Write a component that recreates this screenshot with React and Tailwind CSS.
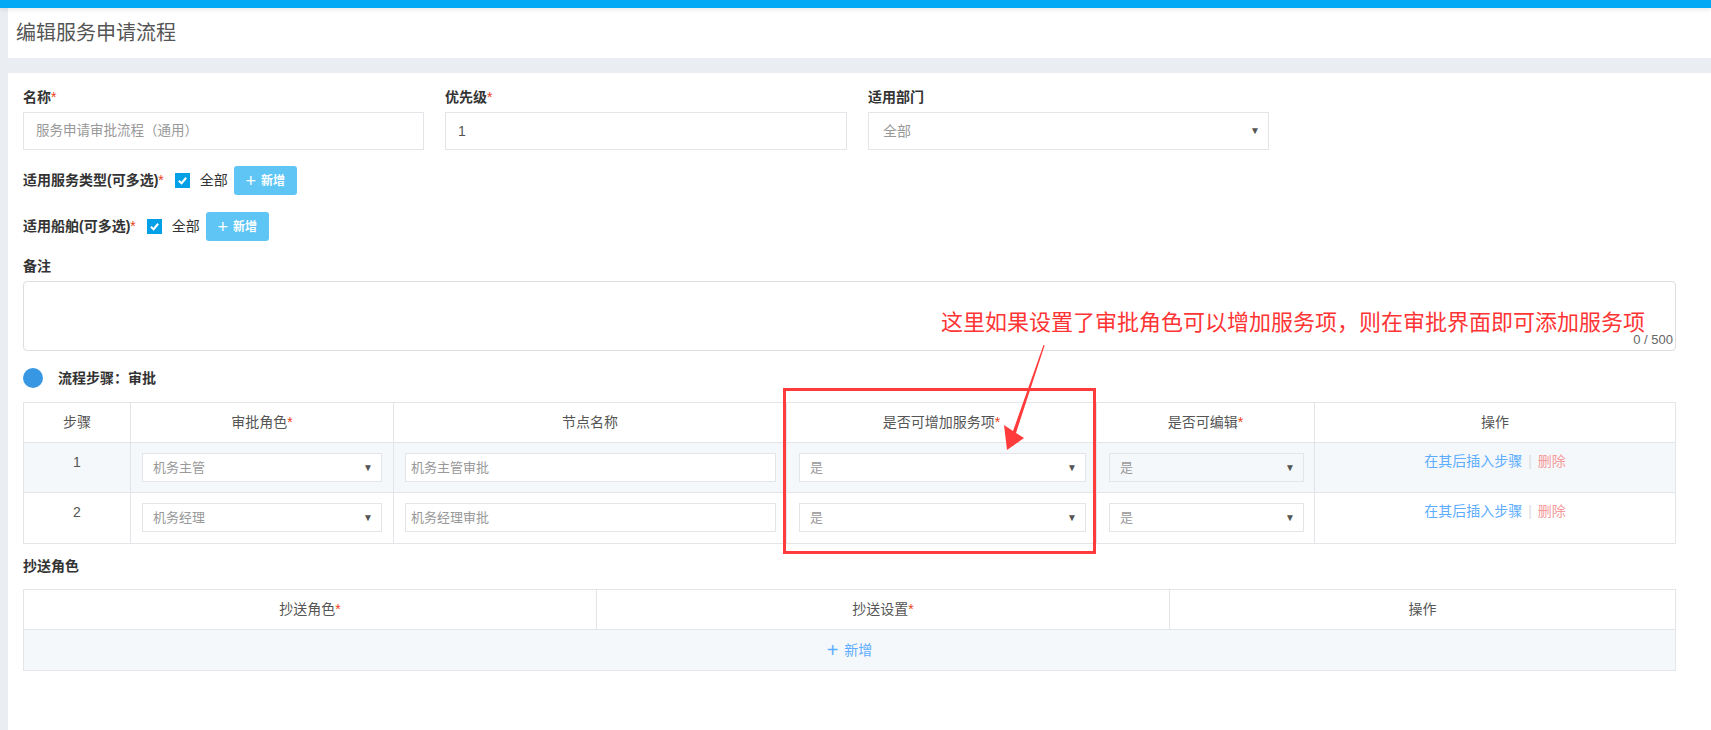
import React from "react";

const Star = () => <span className="font-normal text-[#ed4014]">*</span>;

function Caret() {
  return <span className="text-[10px] leading-none text-[#555]">▼</span>;
}

function Select({ value, className = "bg-white" }) {
  return (
    <div
      className={`flex h-[29px] items-center justify-between border border-[#e3e5e8] pl-[10px] pr-[8px] text-[13px] text-[#999] ${className}`}
    >
      <span>{value}</span>
      <Caret />
    </div>
  );
}

function TextBox({ value }) {
  return (
    <div className="flex h-[29px] items-center border border-[#e3e5e8] bg-white pl-[5px] text-[13px] text-[#999]">
      {value}
    </div>
  );
}

function AddButton() {
  return (
    <button className="flex h-[29px] w-[63px] items-center justify-center gap-[5px] rounded-[3px] bg-[#5ec5f5] text-[12px] font-bold text-white">
      <span className="text-[18px] font-light leading-none">+</span>
      新增
    </button>
  );
}

function Check() {
  return (
    <span className="flex h-[15px] w-[15px] items-center justify-center bg-[#03a0e8]">
      <svg width="11" height="11" viewBox="0 0 12 12">
        <path d="M2 6.2 L5 9 L10 3" fill="none" stroke="white" strokeWidth="2.2" />
      </svg>
    </span>
  );
}

const steps = [
  { n: "1", role: "机务主管", name: "机务主管审批", bg: "bg-[#f5f8fb]" },
  { n: "2", role: "机务经理", name: "机务经理审批", bg: "bg-white" },
];

export default function App() {
  return (
    <div className="relative min-h-screen bg-[#eaedf2] font-['Liberation_Sans','Noto_Sans_CJK_SC',sans-serif] text-[#333]">
      <div className="relative z-10 h-2 bg-[#03a9f4] shadow-[0_2px_4px_rgba(0,0,0,0.08)]" />
      <div className="pl-2">
        {/* header */}
        <div className="flex h-[50px] items-center bg-white pl-2 text-[20px] text-[#555]">
          编辑服务申请流程
        </div>
        <div className="h-[15px]" />

        {/* card */}
        <div className="min-h-[657px] bg-white pl-[15px] pr-[35px] pt-[15px]">
          {/* first row */}
          <div className="flex gap-[21px]">
            <div className="w-[401px]">
              <div className="mb-[6px] h-[18px] text-[14px] font-bold leading-[18px]">
                名称<Star />
              </div>
              <div className="flex h-[38px] items-center border border-[#e3e5e8] pl-[12px] text-[13.5px] text-[#999]">
                服务申请审批流程（通用）
              </div>
            </div>
            <div className="w-[402px]">
              <div className="mb-[6px] h-[18px] text-[14px] font-bold leading-[18px]">
                优先级<Star />
              </div>
              <div className="flex h-[38px] items-center border border-[#e3e5e8] pl-[12px] text-[14px] text-[#555]">
                1
              </div>
            </div>
            <div className="w-[401px]">
              <div className="mb-[6px] h-[18px] text-[14px] font-bold leading-[18px]">
                适用部门
              </div>
              <div className="flex h-[38px] items-center justify-between border border-[#e3e5e8] pl-[14px] pr-[8px] text-[14px] text-[#999]">
                <span>全部</span>
                <Caret />
              </div>
            </div>
          </div>

          {/* service types */}
          <div className="mt-[16px] flex h-[29px] items-center">
            <span className="text-[14px] font-bold">
              适用服务类型(可多选)<Star />
            </span>
            <span className="ml-[11px]">
              <Check />
            </span>
            <span className="ml-[10px] text-[14px]">全部</span>
            <span className="ml-[6px]">
              <AddButton />
            </span>
          </div>

          {/* ships */}
          <div className="mt-[17px] flex h-[29px] items-center">
            <span className="text-[14px] font-bold">
              适用船舶(可多选)<Star />
            </span>
            <span className="ml-[11px]">
              <Check />
            </span>
            <span className="ml-[10px] text-[14px]">全部</span>
            <span className="ml-[6px]">
              <AddButton />
            </span>
          </div>

          {/* remark */}
          <div className="mt-[16px] h-[18px] text-[14px] font-bold leading-[18px]">备注</div>
          <div className="relative mt-[6px] h-[70px] rounded-[4px] border border-[#dcdee2]">
            <span className="absolute bottom-[1px] right-[2px] text-[13px] text-[#666]">
              0 / 500
            </span>
          </div>

          {/* flow steps */}
          <div className="mt-[17px] flex h-[20px] items-center">
            <span className="h-[20px] w-[20px] rounded-full bg-[#3797e2]" />
            <span className="ml-[15px] text-[14px] font-bold">流程步骤：审批</span>
          </div>

          <div className="mt-[14px] border border-[#e3e5e8] text-[14px]">
            <div className="grid h-[40px] grid-cols-[107px_263px_393px_310px_218px_360px] border-b border-[#e3e5e8] text-[#555]">
              <div className="flex items-center justify-center border-r border-[#e3e5e8]">步骤</div>
              <div className="flex items-center justify-center border-r border-[#e3e5e8]">
                审批角色<Star />
              </div>
              <div className="flex items-center justify-center border-r border-[#e3e5e8]">节点名称</div>
              <div className="flex items-center justify-center border-r border-[#e3e5e8]">
                是否可增加服务项<Star />
              </div>
              <div className="flex items-center justify-center border-r border-[#e3e5e8]">
                是否可编辑<Star />
              </div>
              <div className="flex items-center justify-center">操作</div>
            </div>
            {steps.map((s, i) => (
              <div
                key={s.n}
                className={`grid h-[50px] grid-cols-[107px_263px_393px_310px_218px_360px] ${
                  i === 0 ? "border-b border-[#e3e5e8]" : ""
                } ${s.bg}`}
              >
                <div className="flex justify-center border-r border-[#e3e5e8] pt-[9px] leading-[20px] text-[#555]">
                  {s.n}
                </div>
                <div className="border-r border-[#e3e5e8] px-[11px] pt-[10px]">
                  <Select value={s.role} />
                </div>
                <div className="border-r border-[#e3e5e8] pl-[11px] pr-[10px] pt-[10px]">
                  <TextBox value={s.name} />
                </div>
                <div className="border-r border-[#e3e5e8] pl-[12px] pr-[10px] pt-[10px]">
                  <Select value="是" />
                </div>
                <div className="border-r border-[#e3e5e8] pl-[12px] pr-[10px] pt-[10px]">
                  <Select value="是" className="bg-transparent" />
                </div>
                <div className="flex justify-center pt-[8px] leading-[20px]">
                  <span className="text-[#5cadff]">在其后插入步骤</span>
                  <span className="mx-[6px] text-[#ddd]">|</span>
                  <span className="text-[#f59a9a]">删除</span>
                </div>
              </div>
            ))}
          </div>

          {/* cc roles */}
          <div className="mt-[13px] h-[18px] text-[14px] font-bold leading-[18px]">抄送角色</div>
          <div className="mt-[14px] border border-[#e3e5e8] text-[14px]">
            <div className="grid h-[40px] grid-cols-[573px_573px_505px] border-b border-[#e3e5e8] text-[#555]">
              <div className="flex items-center justify-center border-r border-[#e3e5e8]">
                抄送角色<Star />
              </div>
              <div className="flex items-center justify-center border-r border-[#e3e5e8]">
                抄送设置<Star />
              </div>
              <div className="flex items-center justify-center">操作</div>
            </div>
            <div className="flex h-[40px] items-center justify-center gap-[6px] bg-[#f5f8fb] text-[#5cadff]">
              <span className="text-[20px] font-light leading-none">+</span>
              <span>新增</span>
            </div>
          </div>
        </div>
      </div>

      {/* annotation overlay */}
      <div className="absolute left-[941px] top-[307px] text-[22px] leading-[32px] text-[#ff3434]">
        这里如果设置了审批角色可以增加服务项，则在审批界面即可添加服务项
      </div>
      <div className="absolute left-[783px] top-[388px] h-[166px] w-[313px] border-[3px] border-[#ff3b3b]" />
      <svg
        className="absolute left-[995px] top-[340px]"
        width="60"
        height="115"
        viewBox="0 0 60 115"
      >
        <polygon
          points="48.5,5 49.7,5.3 21,93 29,98 12,110 9,85 18,91"
          fill="#ff3b3b"
        />
      </svg>
    </div>
  );
}
